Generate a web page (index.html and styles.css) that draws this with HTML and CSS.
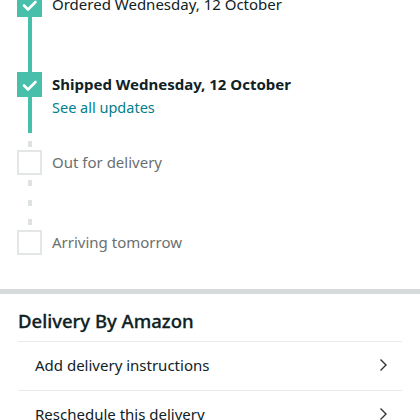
FILE: index.html
```html
<!DOCTYPE html>
<html lang="en">
<head>
    <meta charset="UTF-8">
    <meta name="viewport" content="width=device-width, initial-scale=1">
    <title>Track package</title>
    <link rel="stylesheet" href="styles.css">
</head>
<body>

<div class="tracker">
    <span class="box done">
        <svg viewBox="0 0 25 25" width="25" height="25"><path d="M7 13.5 L11 17.5 L18.5 10" /></svg>
    </span>
    <div class="label">Ordered Wednesday, 12 October</div>

    <span class="conn solid long"></span>
    <div></div>

    <span class="box done">
        <svg viewBox="0 0 25 25" width="25" height="25"><path d="M7 13.5 L11 17.5 L18.5 10" /></svg>
    </span>
    <div class="label current">Shipped Wednesday, 12 October</div>

    <span class="conn split"><span class="part solid"></span><span class="part dashed"></span></span>
    <a class="updates" href="#">See all updates</a>

    <span class="box"></span>
    <div class="label pending">Out for delivery</div>

    <span class="conn dashed long"></span>
    <div></div>

    <span class="box"></span>
    <div class="label pending">Arriving tomorrow</div>
</div>

<div class="band"></div>

<section class="delivery">
    <h2>Delivery By Amazon</h2>
    <ul class="actions">
        <li>
            <span>Add delivery instructions</span>
            <svg viewBox="0 0 8 14" width="8" height="14"><path d="M1.5 1.5 L7 7 L1.5 12.5" /></svg>
        </li>
        <li>
            <span>Reschedule this delivery</span>
            <svg viewBox="0 0 8 14" width="8" height="14"><path d="M1.5 1.5 L7 7 L1.5 12.5" /></svg>
        </li>
    </ul>
</section>

</body>
</html>
```

FILE: styles.css
```css
body {
    font-family: "Noto Sans", "Open Sans", sans-serif;
    background-color: #fff;
    color: #0f1111;
    margin: 0;
    padding: 0;
}

.tracker {
    display: grid;
    grid-template-columns: 25px 1fr;
    column-gap: 10px;
    margin-top: -8px;
    padding-left: 17px;
}

.box {
    width: 25px;
    height: 25px;
    box-sizing: border-box;
    border: 2px solid #e3e6e6;
    background-color: #fff;
}

.box.done {
    border: none;
    background-color: #48bfab;
}

.box svg {
    display: block;
    fill: none;
    stroke: #fff;
    stroke-width: 2.6;
    stroke-linecap: round;
    stroke-linejoin: round;
}

.label {
    font-size: 15px;
    line-height: 25px;
    color: #0f2226;
}

.label.current {
    font-weight: bold;
}

.label.pending {
    color: #6a6f6f;
}

.conn {
    width: 4px;
    margin-left: 11px;
}

.conn.long {
    height: 55px;
}

.conn.split {
    display: flex;
    flex-direction: column;
    height: 53px;
}

.solid {
    background-color: #48bfab;
}

.part.solid {
    height: 36px;
}

.part.dashed {
    flex: 1;
    background: linear-gradient(to bottom, transparent 0 8px, #dfe2e2 8px 14px, transparent 14px);
}

.conn.dashed {
    background: repeating-linear-gradient(to bottom, transparent 0 5px, #dfe2e2 5px 11px, transparent 11px 19.5px);
}

.updates {
    font-size: 14.5px;
    line-height: 20px;
    color: #007f8c;
    text-decoration: none;
    align-self: start;
}

.band {
    height: 5px;
    margin-top: 34px;
    background-color: #d5dbdb;
}

.delivery {
    padding: 0 18px;
}

.delivery h2 {
    font-size: 18.5px;
    font-weight: 500;
    line-height: 24px;
    margin: 0;
    padding: 15px 0 8px;
    color: #0f2226;
    -webkit-text-stroke: 0.3px #0f2226;
}

.actions {
    list-style: none;
    margin: 0;
    padding: 0;
    border-top: 1px solid #e7e9ec;
}

.actions li {
    display: flex;
    align-items: center;
    justify-content: space-between;
    height: 46px;
    padding: 0 15px 2px 17px;
    border-bottom: 1px solid #e7e9ec;
    font-size: 15px;
    color: #0f2226;
}

.actions svg {
    fill: none;
    stroke: #333;
    stroke-width: 1.4;
}
```
